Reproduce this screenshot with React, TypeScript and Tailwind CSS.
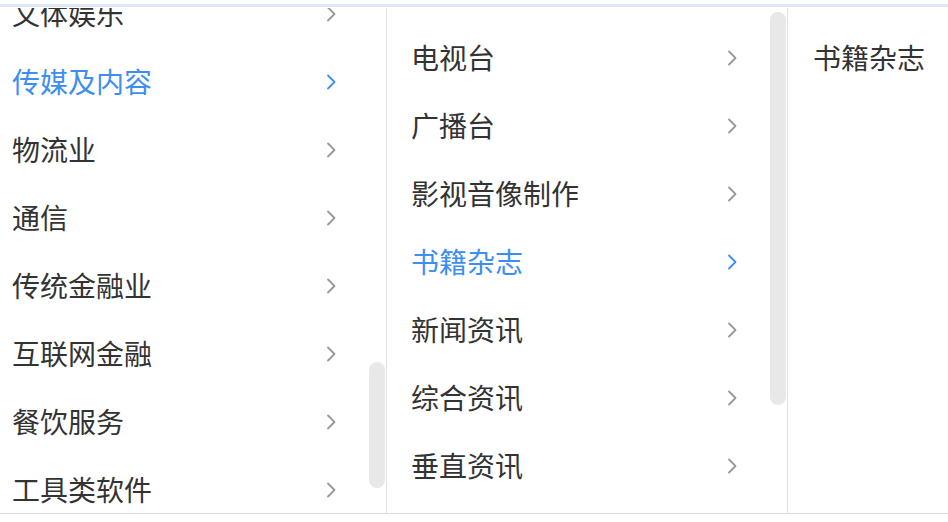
import React from 'react';

const INDUSTRIES = ['文体娱乐', '传媒及内容', '物流业', '通信', '传统金融业', '互联网金融', '餐饮服务', '工具类软件'];
const MEDIA = ['电视台', '广播台', '影视音像制作', '书籍杂志', '新闻资讯', '综合资讯', '垂直资讯'];

function Chevron({ active }: { active?: boolean }) {
  return (
    <svg width="11" height="16" viewBox="0 0 11 16" fill="none" className="shrink-0">
      <path
        d="M2 1.5 L8.5 8 L2 14.5"
        stroke={active ? '#3d8ef0' : '#999999'}
        strokeWidth="1.8"
        strokeLinecap="round"
        strokeLinejoin="round"
      />
    </svg>
  );
}

function Row({ label, active, pl }: { label: string; active?: boolean; pl: string }) {
  return (
    <div className={`flex h-[68px] items-center justify-between pr-[49px] ${pl}`}>
      <span className={`-mt-[3px] ${active ? 'text-[#3d8ef0]' : 'text-[#333333]'}`}>{label}</span>
      <Chevron active={active} />
    </div>
  );
}

export default function App() {
  return (
    <div
      className="h-[522px] w-[948px] overflow-hidden bg-white text-[28px] leading-none"
      style={{ fontFamily: '"Noto Sans CJK SC", "Noto Sans", sans-serif' }}
    >
      <div className="h-[4px]" />
      <div className="h-[3px] bg-[#dfe9f7]" />
      <div className="flex h-[507px] border-b border-[#dddddd] pt-px">
        <div className="relative w-[387px] overflow-hidden border-r border-[#e2e2e2]">
          <div className="-mt-[28px]">
            {INDUSTRIES.map((item, i) => (
              <Row key={item} label={item} active={i === 1} pl="pl-[12px]" />
            ))}
          </div>
          <div className="absolute right-[1px] top-[354px] h-[126px] w-[16px] rounded-full bg-[#e8e8e8]" />
        </div>
        <div className="relative w-[401px] overflow-hidden border-r border-[#e2e2e2]">
          <div className="pt-[16px]">
            {MEDIA.map((item, i) => (
              <Row key={item} label={item} active={i === 3} pl="pl-[24px]" />
            ))}
          </div>
          <div className="absolute right-[1px] top-[4px] h-[393px] w-[16px] rounded-full bg-[#e8e8e8]" />
        </div>
        <div className="flex-1 pl-[25px] pt-[16px]">
          <div className="flex h-[68px] items-center text-[#333333]">
            <span className="-mt-[3px]">书籍杂志</span>
          </div>
        </div>
      </div>
    </div>
  );
}
